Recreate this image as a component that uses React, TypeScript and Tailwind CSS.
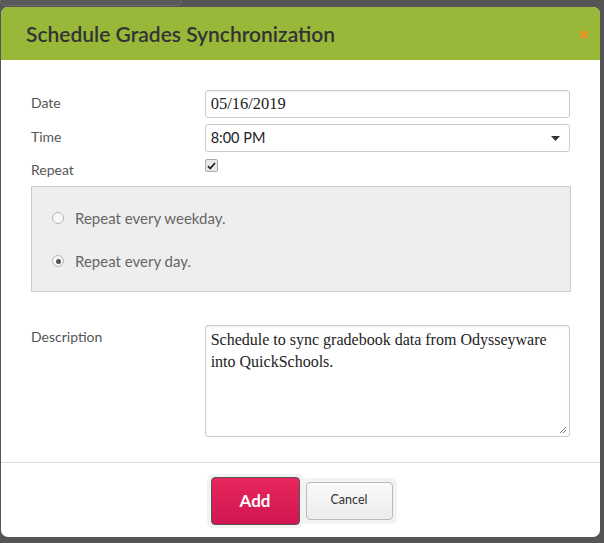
import React from "react";

const sans = "font-['Lato','Open_Sans',sans-serif]";

export default function App() {
  return (
    <div className="relative h-[543px] w-[604px] overflow-hidden bg-[#555555]">
      {/* page behind the overlay */}
      <div className="absolute left-0 top-[-6px] h-[12px] w-[182px] rounded-[5px] border border-[#6a6a6a] bg-[#5a5a5a]" />

      <div className="relative pl-[1px] pt-[7px]">
        <div className={`w-[599px] overflow-hidden rounded-[7px] bg-white ${sans}`}>
          <div className="flex h-[53px] items-center justify-between bg-[#98b83a] pl-[25px] pr-[11px]">
            <h1 className="text-[21px] font-semibold text-[#333333]">Schedule Grades Synchronization</h1>
            <svg width="10" height="9" viewBox="0 0 10 9" className="mt-[1px]">
              <path d="M1.5 1l7 7M8.5 1l-7 7" stroke="#f0901f" strokeWidth="2.6" />
            </svg>
          </div>

          <div className="px-[30px] pt-[30px]">
            <div className="flex items-center">
              <label className="w-[174px] pb-[4px] text-[14px] text-[#555555]">Date</label>
              <div className="flex h-[28px] w-[366px] items-center rounded-[3px] border border-[#cccccc] px-[5px] font-['Liberation_Serif',serif] text-[16.5px] text-[#222222] shadow-[inset_0_1px_1px_rgba(0,0,0,0.06)]">
                05/16/2019
              </div>
            </div>

            <div className="mt-[6px] flex items-center">
              <label className="w-[174px] pb-[4px] text-[14px] text-[#555555]">Time</label>
              <div className="flex h-[28px] w-[366px] items-center justify-between rounded-[3px] border border-[#cccccc] pl-[5px] pr-[9px] text-[14.5px] text-[#222222]">
                <span>8:00 PM</span>
                <svg width="9" height="5" viewBox="0 0 9 5">
                  <path d="M0 0h9L4.5 5z" fill="#333" />
                </svg>
              </div>
            </div>

            <div className="mt-[7px] flex h-[20px] items-start">
              <label className="w-[174px] pt-[1px] text-[14px] leading-[20px] text-[#555555]">Repeat</label>
              <div className="flex h-[13px] w-[13px] items-center justify-center rounded-[2px] border border-[#a9a9a9] bg-[#e9e9e9]">
                <svg width="9" height="8" viewBox="0 0 9 8">
                  <path d="M1 4.2l2.2 2.3L8 1" fill="none" stroke="#222" strokeWidth="1.8" />
                </svg>
              </div>
            </div>

            <div className="mt-[7px] flex h-[106px] w-[540px] flex-col gap-[23px] border border-[#cccccc] bg-[#eeeeee] pl-[20px] pt-[21px] text-[15px] leading-[20px] text-[#666666]">
              <div className="flex items-center gap-[11px]">
                <span className="h-[12px] w-[12px] rounded-full border border-[#b5b5b5] bg-[#f7f7f7]" />
                <span>Repeat every weekday.</span>
              </div>
              <div className="flex items-center gap-[11px]">
                <span className="flex h-[12px] w-[12px] items-center justify-center rounded-full border border-[#b5b5b5] bg-[#f7f7f7]">
                  <span className="h-[5px] w-[5px] rounded-full bg-[#555555]" />
                </span>
                <span>Repeat every day.</span>
              </div>
            </div>

            <div className="mt-[33px] flex items-start">
              <label className="w-[174px] pt-[1px] text-[14px] text-[#555555]">Description</label>
              <div className="relative h-[112px] w-[366px] rounded-[3px] border border-[#cccccc] px-[5px] pt-[3px] font-['Liberation_Serif',serif] text-[16px] leading-[22px] text-[#222222] shadow-[inset_0_1px_2px_rgba(0,0,0,0.08)]">
                Schedule to sync gradebook data from Odysseyware into QuickSchools.
                <svg className="absolute bottom-[2px] right-[2px]" width="8" height="8" viewBox="0 0 8 8">
                  <path d="M7 1L1 7M7 4L4 7" stroke="#777" strokeWidth="1" />
                </svg>
              </div>
            </div>
          </div>

          <div className="mt-[25px] border-t border-[#dddddd]" />

          <div className="flex h-[74px] items-center justify-center pl-[2px] pt-[1px]">
            <div className="rounded-[6px] bg-[#f3f3f3] px-[4px] py-[3px]">
              <button className="h-[48px] w-[89px] rounded-[4px] border border-[#555555] bg-[linear-gradient(180deg,#e8275d_0%,#cf1650_100%)] text-[17px] font-bold text-white">
                Add
              </button>
            </div>
            <div className="-ml-[2px] rounded-[6px] bg-[#f3f3f3] p-[4px]">
              <button className="h-[38px] w-[87px] rounded-[4px] border border-[#bbbbbb] bg-[linear-gradient(180deg,#fafafa_0%,#ececec_100%)] text-[12.5px] text-[#333333]">
                Cancel
              </button>
            </div>
          </div>
        </div>
      </div>
    </div>
  );
}
